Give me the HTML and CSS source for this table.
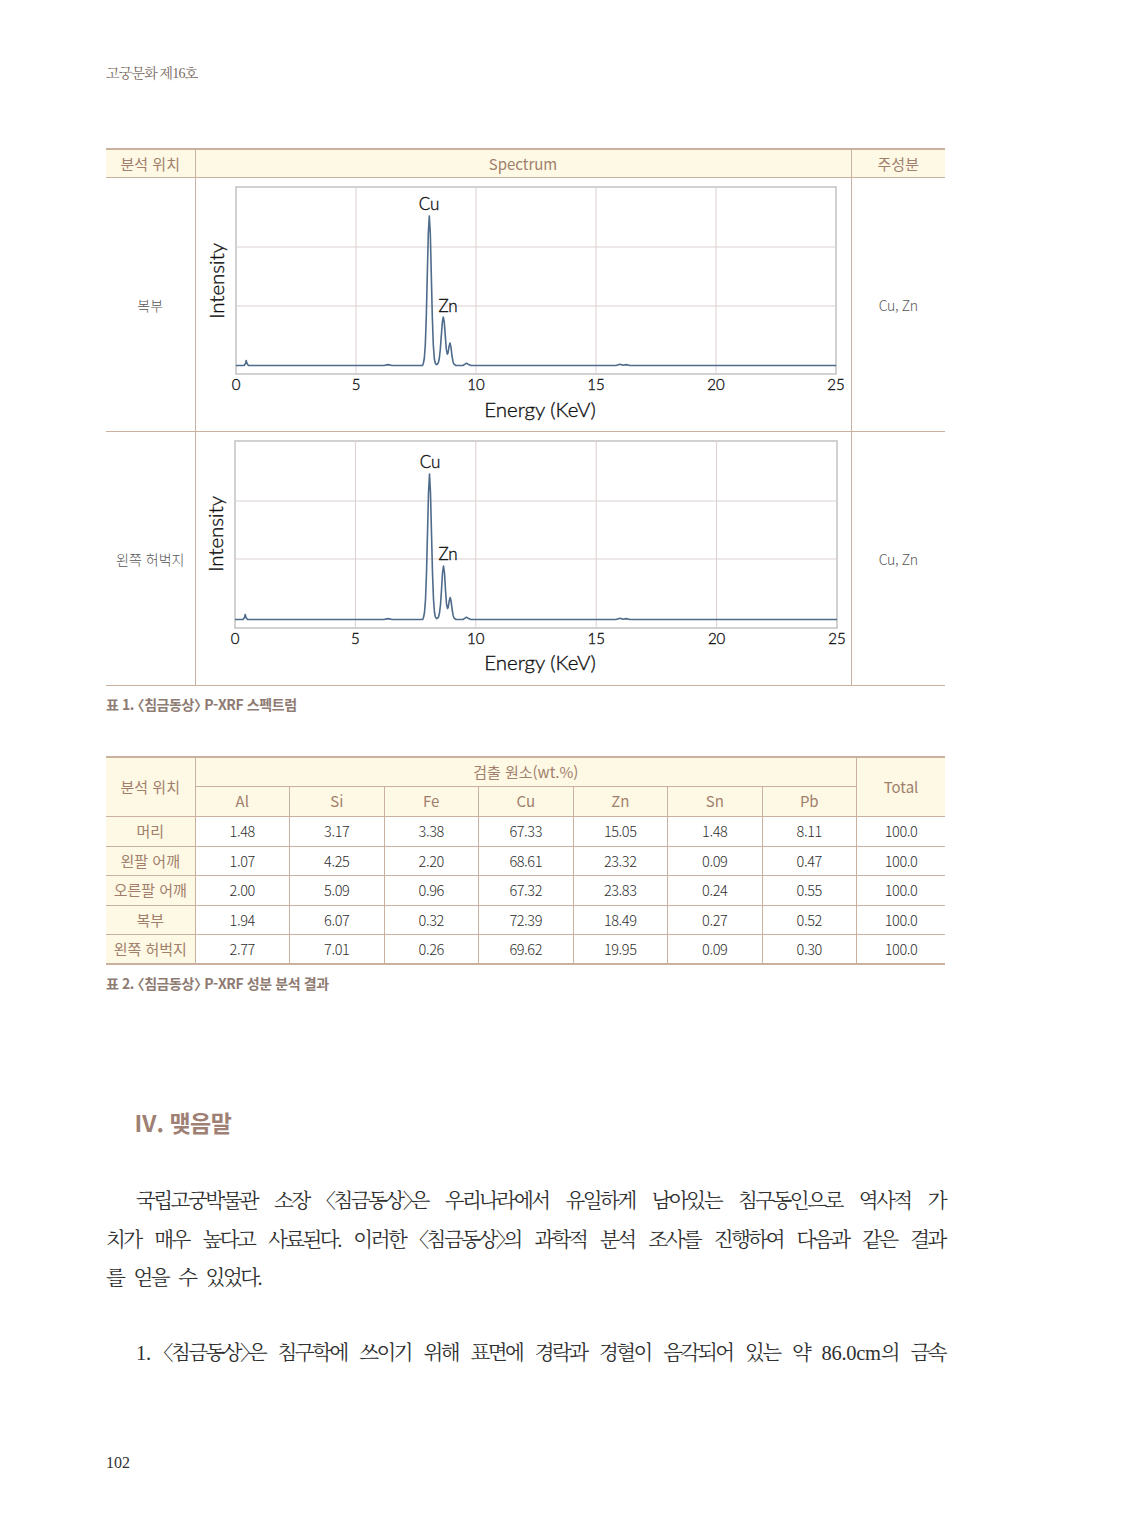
FILE: index.html
```html
<!DOCTYPE html>
<html lang="ko">
<head>
<meta charset="utf-8">
<title>고궁문화 제16호</title>
<link rel="stylesheet" href="styles.css">
</head>
<body>
<div class="page">
  <div class="running-head">고궁문화 제16호</div>

  <table class="spec">
    <colgroup><col class="c-loc"><col class="c-chart"><col class="c-main"></colgroup>
    <thead>
      <tr><th>분석 위치</th><th>Spectrum</th><th>주성분</th></tr>
    </thead>
    <tbody>
      <tr>
        <td class="loc">복부</td>
        <td class="chart-cell">
          <svg class="chart" viewBox="0 0 656 253" width="656" height="253">
            <rect class="frame" x="40" y="9" width="600" height="187"/>
            <g class="grid">
              <line x1="160" y1="9" x2="160" y2="196"/>
              <line x1="280" y1="9" x2="280" y2="196"/>
              <line x1="400" y1="9" x2="400" y2="196"/>
              <line x1="520" y1="9" x2="520" y2="196"/>
              <line x1="40" y1="69" x2="640" y2="69"/>
              <line x1="40" y1="128" x2="640" y2="128"/>
            </g>
            <path class="spectrum" d="M40,187.5 L48,187.5 L49.5,185.5 L50.2,182.5 L51,185.5 L52.5,187.5 L188,187.5 L192,186.6 L196,187.5 L226.5,187.5 L227.3,185.5 L228.3,180.5 L229.3,166.8 L230.3,138.6 L231.3,96.6 L232.3,55.5 L233.3,38 L234.3,55.5 L235.3,96.6 L236.3,138.6 L237.3,166.8 L238.3,180.5 L239.3,185.3 L240.5,186.6 L241.5,186 L242.3,184.9 L243.3,180.5 L244.3,171.4 L245.3,157.9 L246.3,144.6 L247.3,139 L248.3,144.6 L249.3,157.9 L250.3,171.4 L251.3,176.1 L252,175 L253,168.6 L254,165 L255,169.4 L256,178 L257,183.7 L258,186.2 L260,187.5 L267,187.5 L269,186.2 L270.5,185.2 L272,186.2 L275,187.5 L420,187.5 L424,186.2 L427,187.3 L430,186.6 L434,187.5 L640,187.5"/>
            <text class="pk" x="233" y="32">Cu</text>
            <text class="pk" x="252" y="134">Zn</text>
            <g class="tick">
              <text x="40" y="212">0</text>
              <text x="160" y="212">5</text>
              <text x="280" y="212">10</text>
              <text x="400" y="212">15</text>
              <text x="520" y="212">20</text>
              <text x="640" y="212">25</text>
            </g>
            <text class="axis" x="344" y="239">Energy (KeV)</text>
            <text class="axis" transform="translate(28,103) rotate(-90)">Intensity</text>
          </svg>
        </td>
        <td class="main">Cu, Zn</td>
      </tr>
      <tr>
        <td class="loc">왼쪽 허벅지</td>
        <td class="chart-cell">
          <svg class="chart" viewBox="0 0 656 253" width="656" height="253">
            <rect class="frame" x="39" y="9" width="602" height="187"/>
            <g class="grid">
              <line x1="159.4" y1="9" x2="159.4" y2="196"/>
              <line x1="279.8" y1="9" x2="279.8" y2="196"/>
              <line x1="400.2" y1="9" x2="400.2" y2="196"/>
              <line x1="520.6" y1="9" x2="520.6" y2="196"/>
              <line x1="39" y1="69" x2="641" y2="69"/>
              <line x1="39" y1="127" x2="641" y2="127"/>
            </g>
            <path class="spectrum" d="M39,187.5 L47,187.5 L48.5,185.5 L49.2,182.5 L50,185.5 L51.5,187.5 L188,187.5 L192,186.6 L196,187.5 L226.7,187.5 L227.5,185.5 L228.5,180.5 L229.5,167.5 L230.5,141 L231.5,101 L232.5,61 L233.5,42 L234.5,61 L235.5,101 L236.5,141 L237.5,167.5 L238.5,180.5 L239.5,185.3 L240.7,186.6 L241.7,186 L242.5,185 L243.5,181 L244.5,172.5 L245.5,158 L246.5,141 L247.5,134 L248.5,141 L249.5,158 L250.5,172 L251.5,176.5 L252.2,175.5 L253.2,169 L254.2,165.5 L255.2,169.8 L256.2,178 L257.2,183.7 L258.2,186.2 L260,187.5 L267,187.5 L269,186.2 L270.5,185.2 L272,186.2 L275,187.5 L420,187.5 L424,186.2 L427,187.3 L430,186.6 L434,187.5 L641,187.5"/>
            <text class="pk" x="234" y="36">Cu</text>
            <text class="pk" x="252" y="128">Zn</text>
            <g class="tick">
              <text x="39" y="212">0</text>
              <text x="159.4" y="212">5</text>
              <text x="279.8" y="212">10</text>
              <text x="400.2" y="212">15</text>
              <text x="520.6" y="212">20</text>
              <text x="641" y="212">25</text>
            </g>
            <text class="axis" x="344" y="238">Energy (KeV)</text>
            <text class="axis" transform="translate(27,102) rotate(-90)">Intensity</text>
          </svg>
        </td>
        <td class="main">Cu, Zn</td>
      </tr>
    </tbody>
  </table>
  <p class="caption">표 1. 〈침금동상〉 P-XRF 스펙트럼</p>

  <table class="result">
    <colgroup>
      <col class="r-loc">
      <col class="r-el"><col class="r-el"><col class="r-el"><col class="r-el"><col class="r-el"><col class="r-el"><col class="r-el">
      <col class="r-total">
    </colgroup>
    <thead>
      <tr class="h1">
        <th rowspan="2">분석 위치</th>
        <th colspan="7">검출 원소(wt.%)</th>
        <th rowspan="2">Total</th>
      </tr>
      <tr class="h2">
        <th>Al</th><th>Si</th><th>Fe</th><th>Cu</th><th>Zn</th><th>Sn</th><th>Pb</th>
      </tr>
    </thead>
    <tbody>
      <tr class="ra"><th>머리</th><td>1.48</td><td>3.17</td><td>3.38</td><td>67.33</td><td>15.05</td><td>1.48</td><td>8.11</td><td>100.0</td></tr>
      <tr class="rb"><th>왼팔 어깨</th><td>1.07</td><td>4.25</td><td>2.20</td><td>68.61</td><td>23.32</td><td>0.09</td><td>0.47</td><td>100.0</td></tr>
      <tr class="ra"><th>오른팔 어깨</th><td>2.00</td><td>5.09</td><td>0.96</td><td>67.32</td><td>23.83</td><td>0.24</td><td>0.55</td><td>100.0</td></tr>
      <tr class="rb"><th>복부</th><td>1.94</td><td>6.07</td><td>0.32</td><td>72.39</td><td>18.49</td><td>0.27</td><td>0.52</td><td>100.0</td></tr>
      <tr class="ra"><th>왼쪽 허벅지</th><td>2.77</td><td>7.01</td><td>0.26</td><td>69.62</td><td>19.95</td><td>0.09</td><td>0.30</td><td>100.0</td></tr>
    </tbody>
  </table>
  <p class="caption">표 2. 〈침금동상〉 P-XRF 성분 분석 결과</p>

  <h2 class="section">Ⅳ. 맺음말</h2>

  <div class="body-text">
    <p class="line first"><span>국립고궁박물관</span> <span>소장</span> <span>〈침금동상〉은</span> <span>우리나라에서</span> <span>유일하게</span> <span>남아있는</span> <span>침구동인으로</span> <span>역사적</span> <span>가</span></p>
    <p class="line"><span>치가</span> <span>매우</span> <span>높다고</span> <span>사료된다.</span> <span>이러한</span> <span>〈침금동상〉의</span> <span>과학적</span> <span>분석</span> <span>조사를</span> <span>진행하여</span> <span>다음과</span> <span>같은</span> <span>결과</span></p>
    <p class="line last">를 얻을 수 있었다.</p>
  </div>

  <div class="body-text second">
    <p class="line first"><span class="lat">1.</span> <span>〈침금동상〉은</span> <span>침구학에</span> <span>쓰이기</span> <span>위해</span> <span>표면에</span> <span>경락과</span> <span>경혈이</span> <span>음각되어</span> <span>있는</span> <span>약</span> <span><span class="lat">86.0cm</span>의</span> <span>금속</span></p>
  </div>

  <div class="folio">102</div>
</div>
</body>
</html>
```

FILE: styles.css
```css
html, body {
  margin: 0;
  padding: 0;
  background: #ffffff;
}

.page {
  width: 839px;
  padding: 0 178px 0 106px;
  font-family: "Noto Sans CJK KR", "Noto Sans", sans-serif;
  color: #333333;
}

.running-head {
  padding-top: 63px;
  height: 22px;
  font-family: "Liberation Serif", "Noto Serif CJK KR", "Noto Sans CJK KR", serif;
  font-size: 14px;
  line-height: 22px;
  color: #7b6b63;
  letter-spacing: -0.8px;
}

/* ---------- tables ---------- */
table {
  border-collapse: collapse;
  table-layout: fixed;
  width: 839px;
}

.spec {
  margin-top: 63px;
  border-top: 2px solid #c9b09f;
  border-bottom: 1.5px solid #c9b09f;
}

.spec .c-loc { width: 89px; }
.spec .c-chart { width: 656px; }
.spec .c-main { width: 94px; }

.spec th {
  height: 27px;
  padding: 0;
  background: #fef9e4;
  color: #a17f6d;
  font-size: 15px;
  font-weight: 400;
  line-height: 20px;
  border-bottom: 1px solid #c9b09f;
  border-left: 1.5px solid #c9b09f;
}

.spec th:first-child,
.spec td:first-child { border-left: none; }

.spec td {
  height: 253px;
  padding: 0;
  border-top: 1px solid #c9b09f;
  border-left: 1.5px solid #c9b09f;
  text-align: center;
  vertical-align: middle;
  font-size: 14px;
  font-weight: 300;
  color: #555555;
}

.spec td.main {
  font-size: 14px;
  letter-spacing: -0.3px;
}

.chart-cell svg { display: block; }

.chart .frame {
  fill: #ffffff;
  stroke: #c6c6c6;
  stroke-width: 1.6;
}

.chart .grid line {
  stroke: #dccfcf;
  stroke-width: 1;
}

.chart .spectrum {
  fill: none;
  stroke: #4e6b8b;
  stroke-width: 1.6;
  stroke-linejoin: round;
}

.chart text {
  font-family: "Lato", "Open Sans", sans-serif;
  fill: #111111;
  stroke: #111111;
  stroke-width: 0.35px;
  text-anchor: middle;
}

.chart .pk { font-size: 17px; }
.chart .tick text { font-size: 15px; }
.chart .axis { font-size: 20.5px; }

.caption {
  margin: 8px 0 0;
  font-size: 14px;
  line-height: 20px;
  font-weight: 700;
  color: #8e7b72;
  letter-spacing: -0.4px;
  font-feature-settings: "halt" 1;
}

.result {
  margin-top: 42px;
  border-top: 2px solid #c9b09f;
  border-bottom: 2px solid #c9b09f;
}

.result .r-loc { width: 89px; }
.result .r-el { width: 94.5px; }
.result .r-total { width: 88.5px; }

.result th,
.result td {
  padding: 0;
  text-align: center;
  vertical-align: middle;
  border: 1.5px solid #c9b09f;
  line-height: 20px;
}

.result tr > :first-child { border-left: none; }
.result tr > :last-child { border-right: none; }
.result thead tr.h2 > :last-child { border-right: 1.5px solid #c9b09f; }

.result th {
  background: #fef9e4;
  color: #a17f6d;
  font-size: 15px;
  font-weight: 400;
}

.result tr.h1 { height: 29px; }
.result tr.h2 { height: 30px; }
.result tr.ra { height: 30px; }
.result tr.rb { height: 29px; }

.result td {
  font-size: 14.5px;
  font-weight: 300;
  color: #2e2e2e;
  letter-spacing: -0.4px;
}

/* ---------- text ---------- */
.section {
  margin: 114px 0 0 28px;
  font-size: 23px;
  line-height: 30px;
  font-weight: 700;
  color: #9e8074;
  letter-spacing: -0.5px;
}

.body-text {
  margin: 45px 0 0;
  font-family: "Liberation Serif", "Noto Serif CJK KR", "Noto Sans CJK KR", serif;
  font-size: 20.5px;
  line-height: 38.5px;
  color: #2f2f2f;
  letter-spacing: -2.5px;
  font-feature-settings: "halt" 1;
}

.body-text.second { margin-top: 36.5px; }

.body-text .line {
  display: flex;
  justify-content: space-between;
  margin: 0;
  white-space: nowrap;
}

.body-text .line.first { padding-left: 30px; }

.body-text .line.last {
  display: block;
  word-spacing: 7.5px;
}

.body-text .lat {
  letter-spacing: -0.3px;
  font-size: 20.5px;
}

.folio {
  margin-top: 80px;
  font-family: "Liberation Serif", serif;
  font-size: 16px;
  line-height: 20px;
  color: #333333;
}
```
